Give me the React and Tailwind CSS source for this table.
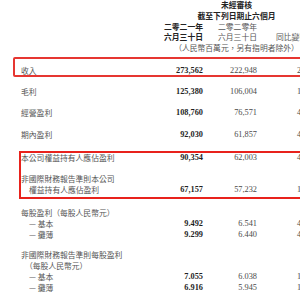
import React from 'react'

const cjk = "font-['Noto_Sans_CJK_TC','Noto_Sans_CJK_SC',sans-serif]"
const num = "font-['Liberation_Serif','Noto_Sans_CJK_TC',serif]"

const NumCells = ({ a, b, c }) => (
  <>
    <div className={`${num} w-[50px] text-right text-[8.3px] font-bold text-[#1f1f1f]`}>{a}</div>
    <div className={`${num} w-[54px] text-right text-[8.3px] text-[#4a4a4a]`}>{b}</div>
    <div className={`${num} w-[53px] pl-[40px] text-left text-[8.3px] text-[#4a4a4a] whitespace-nowrap`}>{c}</div>
  </>
)

const Row = ({ label, a, b, c, className = '' }) => (
  <div className={`flex items-center ${className}`}>
    <div className={`${cjk} flex-1 text-[7.8px] text-[#555] whitespace-nowrap`}>{label}</div>
    <NumCells a={a} b={b} c={c} />
  </div>
)

const SubRow = ({ label, a, b, c, indent = true }) => (
  <div className="flex items-center h-[11px] leading-[11px]">
    <div className={`${cjk} flex-1 text-[7.8px] text-[#555] whitespace-nowrap ${indent ? 'pl-[8px]' : ''}`}>{label}</div>
    <NumCells a={a} b={b} c={c} />
  </div>
)

export default function App() {
  return (
    <div className="w-[300px] h-[300px] overflow-hidden bg-white">
      <div className="w-[330px]">
        {/* header */}
        <div className={`${cjk} text-[7.8px] leading-[10.75px]`}>
          <div className="pl-[163px] pr-[20px] text-center font-bold text-[#222]">未經審核</div>
          <div className="pl-[163px] pr-[20px] text-center font-bold text-[#222] whitespace-nowrap">截至下列日期止六個月</div>
          <div className="flex pr-[20px]">
            <div className="flex-1" />
            <div className="w-[50px] text-right font-bold text-[#222] whitespace-nowrap">二零二一年</div>
            <div className="w-[54px] text-right text-[#555] whitespace-nowrap">二零二零年</div>
            <div className="w-[53px]" />
          </div>
          <div className="flex pr-[20px]">
            <div className="flex-1" />
            <div className="w-[50px] text-right font-bold text-[#222] whitespace-nowrap">六月三十日</div>
            <div className="w-[54px] text-right text-[#555] whitespace-nowrap">六月三十日</div>
            <div className="w-[53px] pl-[19px] text-left text-[#555] whitespace-nowrap">同比變動</div>
          </div>
          <div className="pl-[163px] pr-[20px] flex justify-center text-[#555] whitespace-nowrap">（人民幣百萬元，另有指明者除外）</div>
        </div>

        {/* revenue, boxed */}
        <div className="mt-[3px] ml-[13px] border-2 border-[#e63631] rounded-[2px] pt-[7.5px] pl-[6px] pr-[18px]">
          <Row label="收入" a="273,562" b="222,948" c="23%" className="h-[9px] leading-[9px]" />
        </div>

        <div className="mt-[3.75px] pl-[21px] pr-[20px]">
          <Row label="毛利" a="125,380" b="106,004" c="18%" className="h-[21.5px]" />
          <Row label="經營盈利" a="108,760" b="76,571" c="42%" className="h-[21.5px]" />
          <Row label="期內盈利" a="92,030" b="61,857" c="49%" className="h-[21.5px]" />
        </div>

        {/* attributable profit, boxed */}
        <div className="mt-[5.25px] ml-[19px] border-2 border-[#e8221c] pr-[18px] pb-[1.75px]">
          <Row label="本公司權益持有人應佔盈利" a="90,354" b="62,003" c="46%" className="h-[10px] leading-[10px]" />
          <div className="mt-[11.25px] flex items-end">
            <div className={`${cjk} flex-1 text-[7.8px] leading-[10.5px] text-[#555] whitespace-nowrap`}>
              <div>非國際財務報告準則本公司</div>
              <div className="pl-[8px]">權益持有人應佔盈利</div>
            </div>
            <div className="flex h-[10.5px] leading-[10.5px]">
              <NumCells a="67,157" b="57,232" c="17%" />
            </div>
          </div>
        </div>

        <div className="mt-[8.5px] pl-[21px] pr-[20px]">
          <SubRow label="每股盈利（每股人民幣元）" indent={false} />
          <SubRow label="— 基本" a="9.492" b="6.541" c="45%" />
          <SubRow label="— 攤薄" a="9.299" b="6.440" c="44%" />
        </div>

        <div className="mt-[9px] pl-[21px] pr-[20px]">
          <SubRow label="非國際財務報告準則每股盈利" indent={false} />
          <div className={`${cjk} h-[11px] leading-[11px] text-[7.8px] text-[#555] pl-[4px] whitespace-nowrap`}>（每股人民幣元）</div>
          <SubRow label="— 基本" a="7.055" b="6.038" c="17%" />
          <SubRow label="— 攤薄" a="6.916" b="5.945" c="16%" />
        </div>
      </div>
    </div>
  )
}
